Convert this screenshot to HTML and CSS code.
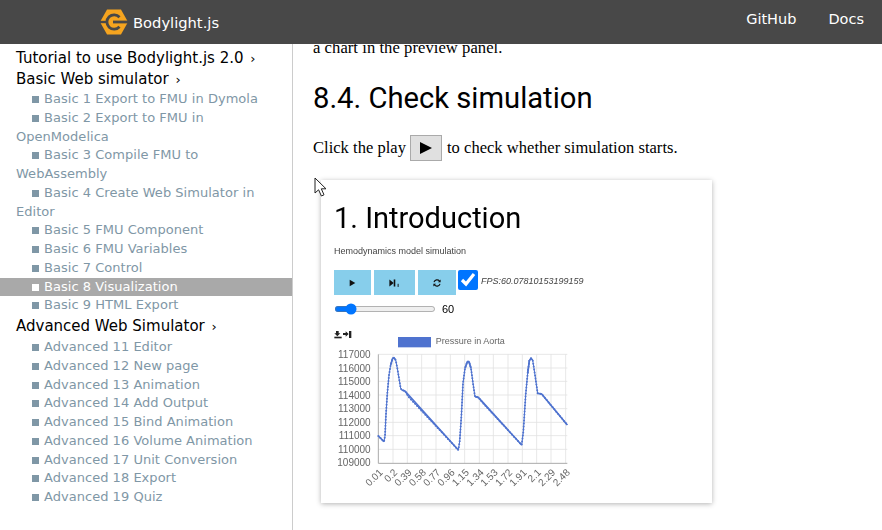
FILE: index.html
```html
<!DOCTYPE html>
<html lang="en">
<head>
  <meta charset="UTF-8" />
  <title>Bodylight.js</title>
  <link rel="stylesheet" href="styles.css">
</head>
<body>
  <header class="topbar">
    <a class="brand">
      <svg class="logo" width="28" height="26" viewBox="0 0 28 26">
        <polygon points="7,0.5 21,0.5 28,13 21,25.5 7,25.5 0,13" fill="#f5a41f"/>
        <path d="M19.5 8.2A7.2 7.2 0 1 0 19.5 17.8" fill="none" stroke="#484848" stroke-width="2.8"/>
        <rect x="0" y="11.8" width="6" height="2.4" fill="#484848"/>
        <path d="M13 11.6H28V14.4H13z" fill="#484848"/>
      </svg>
      <span>Bodylight.js</span>
    </a>
    <nav class="toplinks">
      <a>GitHub</a>
      <a>Docs</a>
    </nav>
  </header>

  <div class="layout">
    <aside class="sidebar">
      <div class="section">Tutorial to use Bodylight.js 2.0 <i>›</i></div>
      <div class="section">Basic Web simulator <i>›</i></div>
      <ul>
        <li>Basic 1 Export to FMU in Dymola</li>
        <li>Basic 2 Export to FMU in OpenModelica</li>
        <li>Basic 3 Compile FMU to WebAssembly</li>
        <li>Basic 4 Create Web Simulator in Editor</li>
        <li>Basic 5 FMU Component</li>
        <li>Basic 6 FMU Variables</li>
        <li>Basic 7 Control</li>
        <li class="active">Basic 8 Visualization</li>
        <li>Basic 9 HTML Export</li>
      </ul>
      <div class="section">Advanced Web Simulator <i>›</i></div>
      <ul>
        <li>Advanced 11 Editor</li>
        <li>Advanced 12 New page</li>
        <li>Advanced 13 Animation</li>
        <li>Advanced 14 Add Output</li>
        <li>Advanced 15 Bind Animation</li>
        <li>Advanced 16 Volume Animation</li>
        <li>Advanced 17 Unit Conversion</li>
        <li>Advanced 18 Export</li>
        <li>Advanced 19 Quiz</li>
      </ul>
    </aside>

    <main class="content">
      <p class="cut">a chart in the preview panel.</p>
      <h2>8.4. Check simulation</h2>
      <p class="step">Click the play
        <span class="playbtn"><svg width="14" height="14" viewBox="0 0 14 14"><polygon points="1,1 13,7 1,13" fill="#000"/></svg></span>
        to check whether simulation starts.</p>

      <section class="shot">
        <h1>1. Introduction</h1>
        <p class="desc">Hemodynamics model simulation</p>
        <div class="controls">
          <button class="ctl c1"><svg width="7" height="8" viewBox="0 0 10 10"><polygon points="1,0.5 9,5 1,9.5" fill="#111"/></svg></button>
          <button class="ctl c2"><svg width="11" height="8" viewBox="0 0 14 10"><polygon points="0.5,0.5 6,5 0.5,9.5" fill="#111"/><rect x="6" y="0.5" width="2" height="9" fill="#111"/><rect x="11" y="6" width="1.2" height="4" fill="#111"/></svg></button>
          <button class="ctl c3"><svg width="8" height="8" viewBox="0 0 10 10"><path d="M1.2 4A4 4 0 0 1 8.2 2.6M8.8 6A4 4 0 0 1 1.8 7.4" fill="none" stroke="#111" stroke-width="1.4"/><polygon points="9.5,0.5 9.5,4 6.2,4" fill="#111"/><polygon points="0.5,9.5 0.5,6 3.8,6" fill="#111"/></svg></button>
          <input class="check" type="checkbox" checked>
          <span class="fps">FPS:60.07810153199159</span>
        </div>
        <div class="speed">
          <input class="range" type="range" min="0" max="500" value="60">
          <span>60</span>
        </div>
        <svg class="chart" width="260" height="170" viewBox="0 0 780 510">
          <!-- save and load icons -->
          <g fill="#222" transform="translate(0 -6)">
            <rect x="28" y="26" width="22" height="5"/>
            <polygon points="33,9 41,9 41,16 46,16 37,25 28,16 33,16"/>
            <polygon points="54,15 62,15 62,10 71,18 62,26 62,21 54,21"/>
            <rect x="72" y="9" width="7" height="21"/>
          </g>
          <rect x="219" y="21" width="99" height="31" fill="#4f73cf"/>
          <text class="legend" x="332" y="42">Pressure in Aorta</text>
          <g transform="translate(0 30)">
            <g class="grid">
              <path d="M160 43H727M160 84H727M160 124H727M160 165H727M160 206H727M160 247H727M160 287H727M160 328H727"/>
              <path d="M204 43V370M247 43V370M290 43V370M333 43V370M376 43V370M419 43V370M463 43V370M505 43V370M549 43V370M592 43V370M635 43V370M678 43V370M722 43V370"/>
            </g>
            <path class="axis" d="M160 43V370H727"/>
            <g class="ticks" text-anchor="end">
              <text x="137" y="54">117000</text>
              <text x="137" y="95">116000</text>
              <text x="137" y="135">115000</text>
              <text x="137" y="176">114000</text>
              <text x="137" y="217">113000</text>
              <text x="137" y="258">112000</text>
              <text x="137" y="298">111000</text>
              <text x="137" y="339">110000</text>
              <text x="137" y="379">109000</text>
              <text transform="translate(168 392) rotate(-45)" y="10">0.01</text>
              <text transform="translate(212 392) rotate(-45)" y="10">0.2</text>
              <text transform="translate(255 392) rotate(-45)" y="10">0.39</text>
              <text transform="translate(298 392) rotate(-45)" y="10">0.58</text>
              <text transform="translate(341 392) rotate(-45)" y="10">0.77</text>
              <text transform="translate(384 392) rotate(-45)" y="10">0.96</text>
              <text transform="translate(427 392) rotate(-45)" y="10">1.15</text>
              <text transform="translate(471 392) rotate(-45)" y="10">1.34</text>
              <text transform="translate(513 392) rotate(-45)" y="10">1.53</text>
              <text transform="translate(557 392) rotate(-45)" y="10">1.72</text>
              <text transform="translate(600 392) rotate(-45)" y="10">1.91</text>
              <text transform="translate(643 392) rotate(-45)" y="10">2.1</text>
              <text transform="translate(686 392) rotate(-45)" y="10">2.29</text>
              <text transform="translate(730 392) rotate(-45)" y="10">2.48</text>
            </g>
            <polyline class="line" points="160,288 177,305 180,288 183,222 187,160 192,105 197,75 203,55 207,53 212,60 217,85 222,115 227,145 230,150 240,153 250,170 400,330 404,305 409,230 414,130 420,85 427,65 432,65 438,85 444,130 450,170 460,172 470,185 590,315 595,275 602,165 608,100 613,62 618,55 623,60 630,105 638,160 650,162 727,255"/>
            <polyline class="line dots" points="160,288 177,305 180,288 183,222 187,160 192,105 197,75 203,55 207,53 212,60 217,85 222,115 227,145 230,150 240,153 250,170 400,330 404,305 409,230 414,130 420,85 427,65 432,65 438,85 444,130 450,170 460,172 470,185 590,315 595,275 602,165 608,100 613,62 618,55 623,60 630,105 638,160 650,162 727,255"/>
            <path class="line fall" d="M160 288L177 305M197 75L203 55L207 53L212 60M230 150L240 153L400 330M420 85L427 65L432 65L438 85M450 170L460 172L590 315M608 100L613 62L618 55L623 60M638 160L650 162L727 255"/>
          </g>
        </svg>
      </section>
    </main>
  </div>

  <svg class="cursor" width="14" height="21" viewBox="0 0 14 21">
    <path d="M1 1V16L4.6 12.8L7.4 19L10 17.8L7.3 11.8H12Z" fill="#fff" stroke="#222" stroke-width="1"/>
  </svg>
</body>
</html>
```
FILE: styles.css
```css
* {
  box-sizing: border-box;
}

html, body {
  height: 100%;
}

body {
  margin: 0;
  display: flex;
  flex-direction: column;
  overflow: hidden;
  background: #fff;
  color: #000;
  font-family: "DejaVu Sans", sans-serif;
}

.topbar {
  height: 44px;
  flex: none;
  display: flex;
  align-items: center;
  justify-content: space-between;
  padding: 0 18px 0 100px;
  background: #484848;
  color: #fff;
}

.brand {
  display: flex;
  align-items: center;
  gap: 5px;
  font-size: 14.7px;
}

.logo {
  margin-top: -1px;
}

.toplinks {
  display: flex;
  gap: 32px;
  padding-bottom: 6px;
  font-size: 14.5px;
}

.layout {
  flex: 1;
  display: flex;
  min-height: 0;
}

.sidebar {
  width: 293px;
  flex: none;
  padding-top: 4px;
  border-right: 1px solid #ccc;
}

.section {
  height: 21px;
  padding-left: 16px;
  font-size: 15px;
  line-height: 21px;
}

.section i {
  margin-left: 2px;
  font-style: normal;
  font-size: 13px;
}

.sidebar ul {
  margin: 0;
  padding: 0;
  list-style: none;
}

.sidebar ul + .section {
  height: 22px;
  margin-top: 1px;
}

.sidebar li {
  padding: 0 4px 0 16px;
  text-indent: 16px;
  font-size: 13px;
  letter-spacing: 0.03px;
  line-height: 18.75px;
  color: #7f97a6;
}

.sidebar li::before {
  content: "";
  display: inline-block;
  width: 7px;
  height: 7px;
  margin-right: 5px;
  background: #7f97a6;
  text-indent: 0;
}

.sidebar li.active {
  background: #a9a9a9;
  color: #fff;
}

.sidebar li.active::before {
  background: #fff;
}

.content {
  flex: 1;
  min-width: 0;
  overflow: hidden;
  padding-left: 20px;
}

.cut {
  margin: -6px 0 0;
  font-family: "Liberation Serif", serif;
  font-size: 16.6px;
  letter-spacing: 0.05px;
  line-height: 19px;
}

h2 {
  margin: 20px 0 0;
  font-family: Roboto, sans-serif;
  font-weight: 400;
  font-size: 29.2px;
  line-height: 42px;
}

.step {
  margin: 16px 0 0;
  display: flex;
  align-items: center;
  gap: 4px;
  font-family: "Liberation Serif", serif;
  font-size: 16.5px;
  letter-spacing: 0.03px;
  line-height: 26px;
}

.playbtn {
  width: 32px;
  height: 26px;
  margin-right: 1px;
  display: flex;
  align-items: center;
  justify-content: center;
  background: #e0e0e0;
  border: 1px solid #aaa;
}

.shot {
  width: 391px;
  height: 323px;
  margin: 19px 0 0 8px;
  padding: 17px 0 0 13px;
  background: #fff;
  box-shadow: 0 1px 5px rgba(0, 0, 0, 0.3);
  filter: blur(0.3px);
}

.shot h1 {
  margin: 0;
  font-family: Roboto, sans-serif;
  font-weight: 400;
  font-size: 29px;
  line-height: 42px;
}

.desc {
  margin: 6px 0 0;
  font-family: "Liberation Sans", sans-serif;
  font-size: 9px;
  line-height: 12px;
  color: #444;
}

.controls {
  margin-top: 13px;
  display: flex;
  align-items: flex-start;
  gap: 3px;
}

.ctl {
  height: 25px;
  padding: 0;
  border: none;
  display: flex;
  align-items: center;
  justify-content: center;
  background: #87ceeb;
}

.c1 { width: 37px; }
.c2 { width: 41px; }
.c3 { width: 38px; }

.check {
  width: 20px;
  height: 20px;
  margin: 0 0 0 -1px;
}

.fps {
  margin-top: 5px;
  font-family: "Liberation Sans", sans-serif;
  font-style: italic;
  font-size: 9px;
  line-height: 12px;
  color: #444;
}

.speed {
  margin-top: 6px;
  display: flex;
  align-items: center;
  gap: 6px;
  height: 16px;
  font-family: "Liberation Sans", sans-serif;
  font-size: 11px;
}

.range {
  width: 136px;
  height: 16px;
  margin: 0;
  zoom: 0.75;
}

.chart {
  display: block;
  margin: 13px 0 0 -9px;
}

.legend {
  font-family: "Liberation Sans", sans-serif;
  font-size: 27px;
  fill: #666;
}

.grid path {
  fill: none;
  stroke: #e2e2e2;
  stroke-width: 2.5;
}

.axis {
  fill: none;
  stroke: #aaa;
  stroke-width: 3;
}

.ticks text {
  font-family: "Liberation Sans", sans-serif;
  font-size: 30px;
  fill: #666;
}

.line {
  fill: none;
  stroke: #4f73cf;
  stroke-width: 3;
  stroke-linejoin: round;
}

.line.dots {
  stroke-width: 6;
  stroke-linecap: round;
  stroke-dasharray: 0 9;
}

.line.fall {
  stroke-width: 5;
}

.cursor {
  position: absolute;
  left: 314px;
  top: 177px;
}
```
